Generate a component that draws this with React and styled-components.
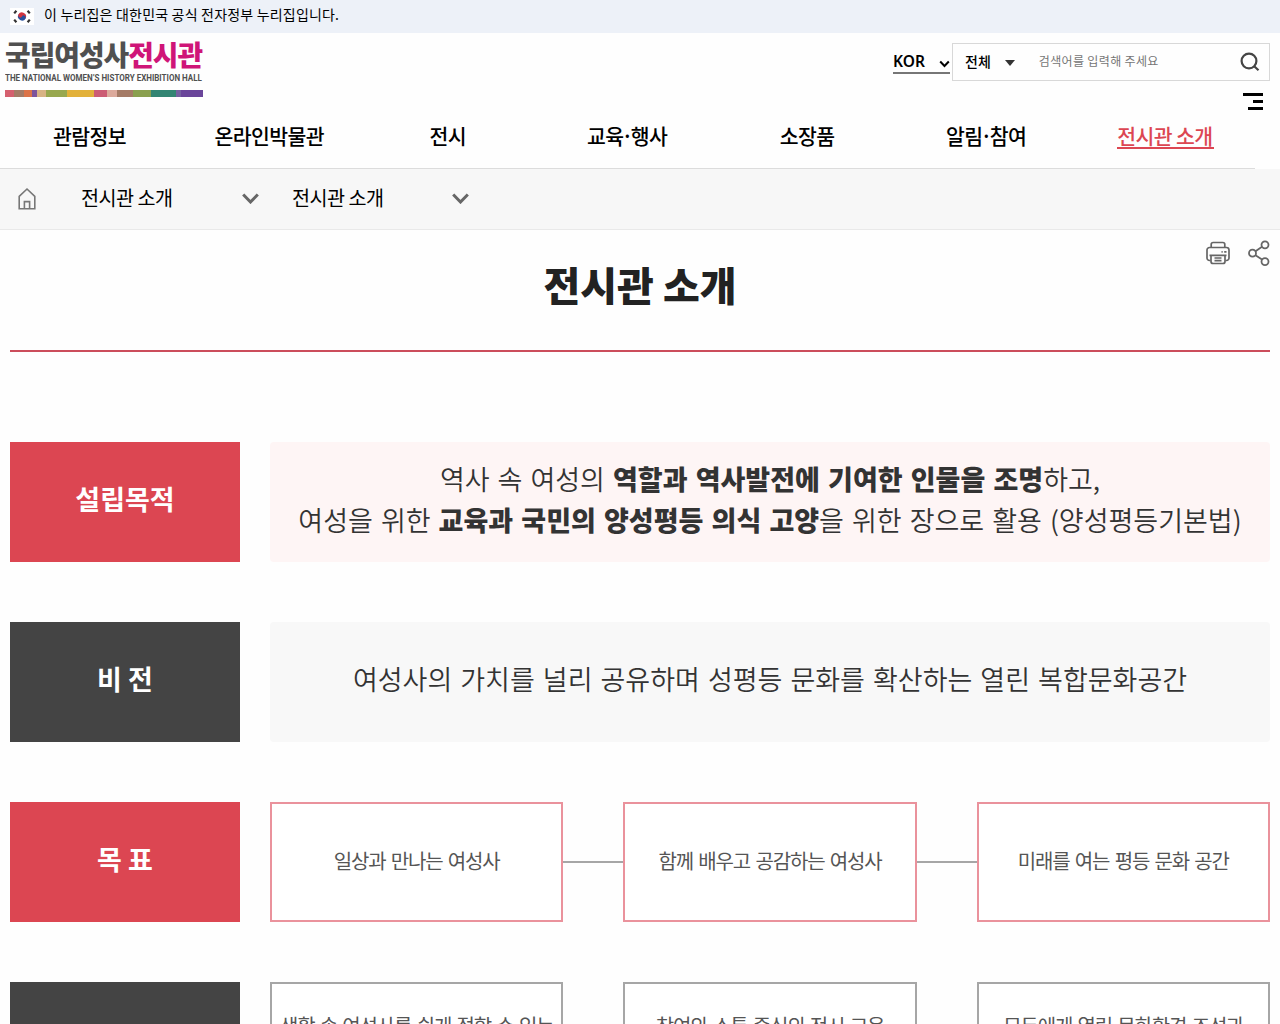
import React from "react";
import styled, { createGlobalStyle } from "styled-components";

const Global = createGlobalStyle`
  * { box-sizing: border-box; }
  body {
    margin: 0;
    background: #fefefe;
    color: #000;
    font-family: "Noto Sans CJK KR", "Noto Sans", sans-serif;
  }
  h1, p, ul { margin: 0; padding: 0; }
  b { font-weight: 800; }
`;

const Page = styled.div`
  height: 1024px;
  overflow: hidden;
`;

const Label = styled.span`
  display: inline-block;
  white-space: pre;
  font-size: ${(p) => p.$size}px;
  font-weight: ${(p) => p.$weight || 400};
  line-height: ${(p) => p.$line || 1.4};
  letter-spacing: ${(p) => p.$track || 0}px;
  word-spacing: ${(p) => p.$word || 0}px;
  color: ${(p) => p.$color || "inherit"};
  transform: scaleX(${(p) => p.$sx || 1});
  transform-origin: ${(p) => p.$origin || "center"};
`;

const GovBar = styled.div`
  display: flex;
  align-items: center;
  gap: 10px;
  height: 33px;
  padding: 0 10px 4px;
  background: #edf1f8;
  svg { margin-top: 3px; }
`;

const Header = styled.header`
  display: flex;
  justify-content: space-between;
  height: 72px;
  padding: 7px 10px 0 5px;
`;

const Logo = styled.a`
  display: flex;
  flex-direction: column;
  width: 198px;
`;

const LogoName = styled.div`
  display: flex;
  height: 31px;
  align-items: center;
  padding-bottom: 3px;
  color: #505050;
  em { font-style: normal; color: #cf1578; }
`;

const LogoSub = styled.div`
  display: flex;
  align-items: center;
  height: 14px;
  margin-bottom: 5px;
  font-family: Roboto, sans-serif;
  color: #505050;
`;

const Stripes = styled.div`
  display: flex;
  height: 7px;
`;
const Stripe = styled.i`
  flex: ${(p) => p.$w};
  background: ${(p) => p.$c};
`;

const Tools = styled.div`
  display: flex;
  flex-direction: column;
  align-items: flex-end;
  padding-top: 3px;
`;

const ToolRow = styled.div`
  display: flex;
  gap: 2px;
`;

const Lang = styled.div`
  display: flex;
  align-items: center;
  justify-content: space-between;
  width: 57px;
  height: 31px;
  padding-top: 7px;
  border-bottom: 2px solid #767676;
  font-family: "Noto Sans", sans-serif;
  svg { margin-top: 5px; }
`;

const Search = styled.div`
  display: flex;
  align-items: center;
  width: 318px;
  height: 38px;
  padding: 0 9px 1px 12px;
  border: 1px solid #d8d8d8;
`;
const Caret = styled.i`
  margin: 2px 24px 0 14px;
  border: 5.5px solid transparent;
  border-top: 6px solid #333;
  border-bottom: 0;
`;
const Grow = styled.span`
  flex: 1;
`;

const Menu = styled.div`
  display: flex;
  flex-direction: column;
  align-items: flex-end;
  gap: 4px;
  margin: 12px 7px 0 0;
`;
const MenuLine = styled.i`
  width: ${(p) => p.$w}px;
  height: 3px;
  background: #000;
`;

const Nav = styled.nav`
  display: grid;
  grid-template-columns: repeat(7, 1fr);
  width: 1255px;
  height: 64px;
  border-bottom: 1px solid #dcdcdc;
`;
const NavItem = styled.a`
  display: flex;
  justify-content: center;
  align-items: center;
  color: ${(p) => (p.$active ? "#dc4652" : "#000")};
`;
const Under = styled.span`
  display: flex;
  justify-content: center;
  width: ${(p) => (p.$active ? "97px" : "auto")};
  height: 24px;
  align-items: center;
  border-bottom: 2px solid ${(p) => (p.$active ? "#dc4652" : "transparent")};
`;
const Dot = styled.span`
  margin: 0 -2px;
`;

const Crumbs = styled.div`
  display: flex;
  align-items: center;
  height: 61px;
  padding: 0 18px;
  background: #f7f7f7;
  border-bottom: 1px solid #e9e9e9;
`;
const Crumb = styled.div`
  display: flex;
  align-items: center;
  justify-content: space-between;
  width: ${(p) => p.$w}px;
  margin-left: ${(p) => p.$gap}px;
  padding-bottom: 2px;
  svg { margin-top: 1px; }
`;

const Main = styled.main`
  padding: 0 10px;
`;
const TitleArea = styled.div`
  display: grid;
  grid-template-columns: 1fr auto 1fr;
  height: 122px;
  border-bottom: 2px solid #cb4d5b;
`;
const Title = styled.h1`
  grid-column: 2;
  padding-top: 26px;
  line-height: 0;
  font-size: 40px;
`;
const Actions = styled.div`
  display: flex;
  justify-content: flex-end;
  gap: 18px;
  padding-top: 9px;
`;

const Rows = styled.div`
  display: flex;
  flex-direction: column;
  gap: 60px;
  padding-top: 90px;
`;
const Row = styled.section`
  display: grid;
  grid-template-columns: 230px 1fr;
  gap: 30px;
  height: 120px;
`;
const RowHead = styled.div`
  display: flex;
  align-items: center;
  justify-content: center;
  padding-bottom: 6px;
  background: ${(p) => (p.$red ? "#dc4652" : "#444")};
  color: #fff;
`;
const Panel = styled.div`
  display: flex;
  flex-direction: column;
  align-items: center;
  justify-content: center;
  padding-bottom: ${(p) => (p.$pink ? 6 : 7)}px;
  border-radius: 4px;
  background: ${(p) => (p.$pink ? "#fef5f5" : "#f8f8f8")};
  color: #333;
`;
const Boxes = styled.div`
  display: flex;
  align-items: center;
`;
const Link = styled.i`
  flex: 0 0 60px;
  height: 2px;
  background: ${(p) => (p.$hidden ? "transparent" : "#a6a6a6")};
`;
const Box = styled.div`
  flex: 1 1 0;
  min-width: 0;
  display: flex;
  justify-content: center;
  align-items: ${(p) => (p.$top ? "flex-start" : "center")};
  height: 120px;
  padding: ${(p) => (p.$top ? "28px 0 0" : "0 0 3px")};
  border: 2px solid ${(p) => (p.$red ? "#ea929c" : "#a6a6a6")};
  background: #fff;
  color: #555;
`;

const stripes = [
  [9, "#d5606f"], [10, "#a57b66"], [8, "#dc7348"], [5, "#7d549c"], [9, "#d8b384"],
  [21, "#98a84f"], [27, "#e2b13a"], [13, "#cc5c74"], [10, "#dcaa9c"], [16, "#a57b66"],
  [18, "#8aa04f"], [25, "#338573"], [5, "#7560a0"], [22, "#6a459a"],
];

const nav = ["관람정보", "온라인박물관", "전시", "교육·행사", "소장품", "알림·참여", "전시관 소개"];

const goals = ["일상과 만나는 여성사", "함께 배우고 공감하는 여성사", "미래를 여는 평등 문화 공간"];
const tasks = ["생활 속 여성사를 쉽게 접할 수 있는", "참여와 소통 중심의 전시 교육", "모두에게 열린 문화환경 조성과"];

const Flag = () => (
  <svg width="24" height="17" viewBox="0 0 24 17">
    <rect width="24" height="17" fill="#fff" />
    <g transform="rotate(28 12 8.5)">
      <path d="M8 8.5a4 4 0 0 1 8 0z" fill="#d0343f" />
      <path d="M8 8.5a4 4 0 0 0 8 0z" fill="#28509c" />
      <circle cx="10" cy="8.5" r="2" fill="#d0343f" />
      <circle cx="14" cy="8.5" r="2" fill="#28509c" />
    </g>
    <g stroke="#333" strokeWidth="2.2">
      <path d="M4.2 5.4 6.4 2.8M17.6 2.8l2.2 2.6M4.2 11.6l2.2 2.6M17.6 14.2l2.2-2.6" />
    </g>
  </svg>
);

const Chevron = ({ w, h, sw, color }) => (
  <svg width={w} height={h} viewBox={`0 0 ${w} ${h}`} fill="none" stroke={color} strokeWidth={sw}>
    <path d={`M1.2 1.5 L${w / 2} ${h - 2} L${w - 1.2} 1.5`} />
  </svg>
);

const HomeIcon = () => (
  <svg width="18" height="24" viewBox="0 0 18 24" fill="none" stroke="#777" strokeWidth="1.6">
    <path d="M1.2 21.8V9.400L9 2 16.800 9.400v12.400z" />
    <path d="M6.400 21.600V14.600h5.200v7" />
  </svg>
);

const SearchIcon = () => (
  <svg width="20" height="20" viewBox="0 0 20 20" fill="none" stroke="#444" strokeWidth="2.2">
    <circle cx="9" cy="9" r="7.4" />
    <path d="M14.2 14.200l4.300 4" />
  </svg>
);

const PrintIcon = () => (
  <svg width="24" height="28" viewBox="0 0 24 28" fill="none" stroke="#666" strokeWidth="1.7">
    <path d="M5.200 8V5.500a2 2 0 0 1 2-2h9.600a2 2 0 0 1 2 2V8" />
    <path d="M4.500 21.500H3.500a2.500 2.500 0 0 1-2.500-2.500v-8A2.500 2.500 0 0 1 3.500 8.500h17a2.500 2.500 0 0 1 2.500 2.500v8a2.500 2.500 0 0 1-2.500 2.500h-1" />
    <path d="M3.500 16.300h17M5 16.300v6.200a2 2 0 0 0 2 2h10a2 2 0 0 0 2-2v-6.200M8.500 19h7M8.500 21.700h7M15.500 12.800h1.200M18.200 12.800h2.300" />
  </svg>
);

const ShareIcon = () => (
  <svg width="22" height="28" viewBox="0 0 22 28" fill="none" stroke="#666" strokeWidth="1.8">
    <circle cx="4.500" cy="14.200" r="3.500" />
    <circle cx="17" cy="5.800" r="3.500" />
    <circle cx="17" cy="22.600" r="3.500" />
    <path d="M7.500 12.200l6.500-4.400M7.500 16.300l6.500 4.200" />
  </svg>
);

const BoxRow = ({ items, red }) => (
  <Boxes>
    {items.map((text, i) => (
      <React.Fragment key={text}>
        {i > 0 && <Link $hidden={!red} />}
        <Box $red={red} $top={!red}>
          <Label $size={20} $track={-1.15} $word={2}>{text}</Label>
        </Box>
      </React.Fragment>
    ))}
  </Boxes>
);

const NavText = ({ text }) => {
  const [a, b] = text.split("·");
  return b ? <>{a}<Dot>·</Dot>{b}</> : a;
};

export default function App() {
  return (
    <Page>
      <Global />
      <GovBar>
        <Flag />
        <Label $size={14} $track={0.19}>이 누리집은 대한민국 공식 전자정부 누리집입니다.</Label>
      </GovBar>
      <Header>
        <Logo>
          <LogoName>
            <Label $size={28} $weight={800} $sx={0.995} $origin="left" $track={-1} $line={1}>국립여성사<em>전시관</em></Label>
          </LogoName>
          <LogoSub>
            <Label $size={9} $weight={700} $sx={0.89} $origin="left" $line={1}>THE NATIONAL WOMEN’S HISTORY EXHIBITION HALL</Label>
          </LogoSub>
          <Stripes>
            {stripes.map(([w, c], i) => <Stripe key={i} $w={w} $c={c} />)}
          </Stripes>
        </Logo>
        <Tools>
          <ToolRow>
            <Lang>
              <Label $size={16} $weight={600} $sx={0.97} $origin="left">KOR</Label>
              <Chevron w={11} h={8} sw={2} color="#000" />
            </Lang>
            <Search>
              <Label $size={14} $weight={500}>전체</Label>
              <Caret />
              <Label $size={12} $track={0.35} $color="#757575">검색어를 입력해 주세요</Label>
              <Grow />
              <SearchIcon />
            </Search>
          </ToolRow>
          <Menu>
            <MenuLine $w={20} />
            <MenuLine $w={10} />
            <MenuLine $w={15} />
          </Menu>
        </Tools>
      </Header>
      <Nav>
        {nav.map((t, i) => (
          <NavItem key={t} $active={i === 6}>
            <Under $active={i === 6}>
              <Label $size={21} $weight={500} $track={-0.6} $sx={0.975}><NavText text={t} /></Label>
            </Under>
          </NavItem>
        ))}
      </Nav>
      <Crumbs>
        <HomeIcon />
        <Crumb $gap={45} $w={178}>
          <Label $size={20} $track={-0.5} $sx={0.98} $origin="left">전시관 소개</Label>
          <Chevron w={17} h={11} sw={3} color="#666" />
        </Crumb>
        <Crumb $gap={33} $w={177}>
          <Label $size={20} $track={-0.5} $sx={0.98} $origin="left">전시관 소개</Label>
          <Chevron w={17} h={11} sw={3} color="#666" />
        </Crumb>
      </Crumbs>
      <Main>
        <TitleArea>
          <Title><Label $size={40} $weight={800} $color="#222">전시관 소개</Label></Title>
          <Actions>
            <PrintIcon />
            <ShareIcon />
          </Actions>
        </TitleArea>
        <Rows>
          <Row>
            <RowHead $red><Label $size={27} $weight={700}>설립목적</Label></RowHead>
            <Panel $pink>
              <Label $size={27} $weight={350} $line="41px" $word={2}>
                역사 속 여성의 <b>역할과 역사발전에 기여한 인물을 조명</b>하고,
              </Label>
              <Label $size={27} $weight={350} $line="41px" $word={2}>
                여성을 위한 <b>교육과 국민의 양성평등 의식 고양</b>을 위한 장으로 활용 (양성평등기본법)
              </Label>
            </Panel>
          </Row>
          <Row>
            <RowHead><Label $size={27} $weight={700}>비 전</Label></RowHead>
            <Panel>
              <Label $size={27} $weight={350} $line="41px" $word={2}>
                여성사의 가치를 널리 공유하며 성평등 문화를 확산하는 열린 복합문화공간
              </Label>
            </Panel>
          </Row>
          <Row>
            <RowHead $red><Label $size={27} $weight={700}>목 표</Label></RowHead>
            <BoxRow items={goals} red />
          </Row>
          <Row>
            <RowHead />
            <BoxRow items={tasks} />
          </Row>
        </Rows>
      </Main>
    </Page>
  );
}
